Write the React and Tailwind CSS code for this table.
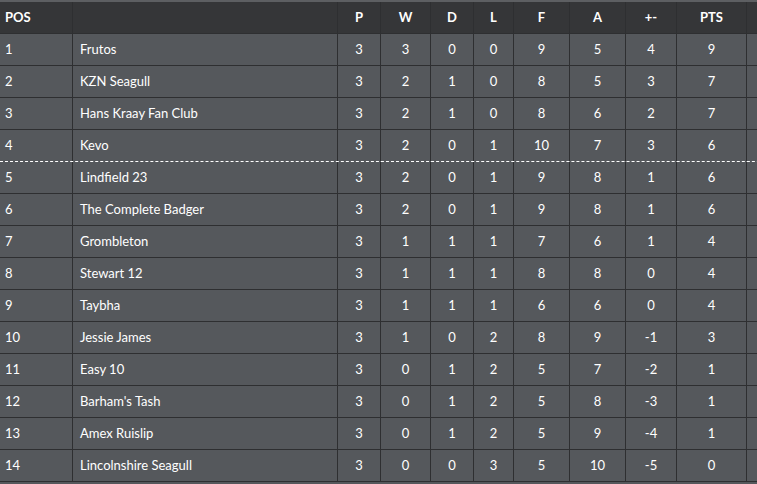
import React from "react";

const rows = [
  [1, "Frutos", 3, 3, 0, 0, 9, 5, 4, 9],
  [2, "KZN Seagull", 3, 2, 1, 0, 8, 5, 3, 7],
  [3, "Hans Kraay Fan Club", 3, 2, 1, 0, 8, 6, 2, 7],
  [4, "Kevo", 3, 2, 0, 1, 10, 7, 3, 6],
  [5, "Lindfield 23", 3, 2, 0, 1, 9, 8, 1, 6],
  [6, "The Complete Badger", 3, 2, 0, 1, 9, 8, 1, 6],
  [7, "Grombleton", 3, 1, 1, 1, 7, 6, 1, 4],
  [8, "Stewart 12", 3, 1, 1, 1, 8, 8, 0, 4],
  [9, "Taybha", 3, 1, 1, 1, 6, 6, 0, 4],
  [10, "Jessie James", 3, 1, 0, 2, 8, 9, -1, 3],
  [11, "Easy 10", 3, 0, 1, 2, 5, 7, -2, 1],
  [12, "Barham's Tash", 3, 0, 1, 2, 5, 8, -3, 1],
  [13, "Amex Ruislip", 3, 0, 1, 2, 5, 9, -4, 1],
  [14, "Lincolnshire Seagull", 3, 0, 0, 3, 5, 10, -5, 0],
];

const heads = ["P", "W", "D", "L", "F", "A", "+-", "PTS"];
const grid =
  "grid grid-cols-[73px_265px_43px_50px_43px_40px_56px_56px_51px_70px_60px]";

export default function App() {
  return (
    <div
      className="w-[757px] h-[484px] overflow-hidden bg-[#55585c] text-white text-[13px]"
      style={{ fontFamily: "Lato, 'Open Sans', sans-serif" }}
    >
      <div className="w-[810px] border-t-2 border-[#5d5f62]">
        <div className={`${grid} h-[32px] bg-[#353638] border-b border-[#2e2f31] font-bold`}>
          <div className="border-r border-[#2e2f31] px-[5px] pt-px flex items-center">POS</div>
          <div className="border-r border-[#2e2f31]"></div>
          {heads.map((h) => (
            <div key={h} className="border-r border-[#2e2f31] pt-px flex items-center justify-center">
              {h}
            </div>
          ))}
          <div></div>
        </div>
        {rows.map((r) => (
          <div
            key={r[0]}
            className={`${grid} h-[32px] border-b ${
              r[0] === 4 ? "border-dashed border-white" : "border-[#2e2f31]"
            }`}
          >
            <div className="border-r border-solid border-[#2e2f31] px-[5px] pt-px flex items-center">{r[0]}</div>
            <div className="border-r border-solid border-[#2e2f31] px-[7px] pt-px flex items-center">{r[1]}</div>
            {r.slice(2).map((v, i) => (
              <div
                key={i}
                className="border-r border-solid border-[#2e2f31] pt-px flex items-center justify-center"
              >
                {v}
              </div>
            ))}
            <div></div>
          </div>
        ))}
      </div>
    </div>
  );
}
